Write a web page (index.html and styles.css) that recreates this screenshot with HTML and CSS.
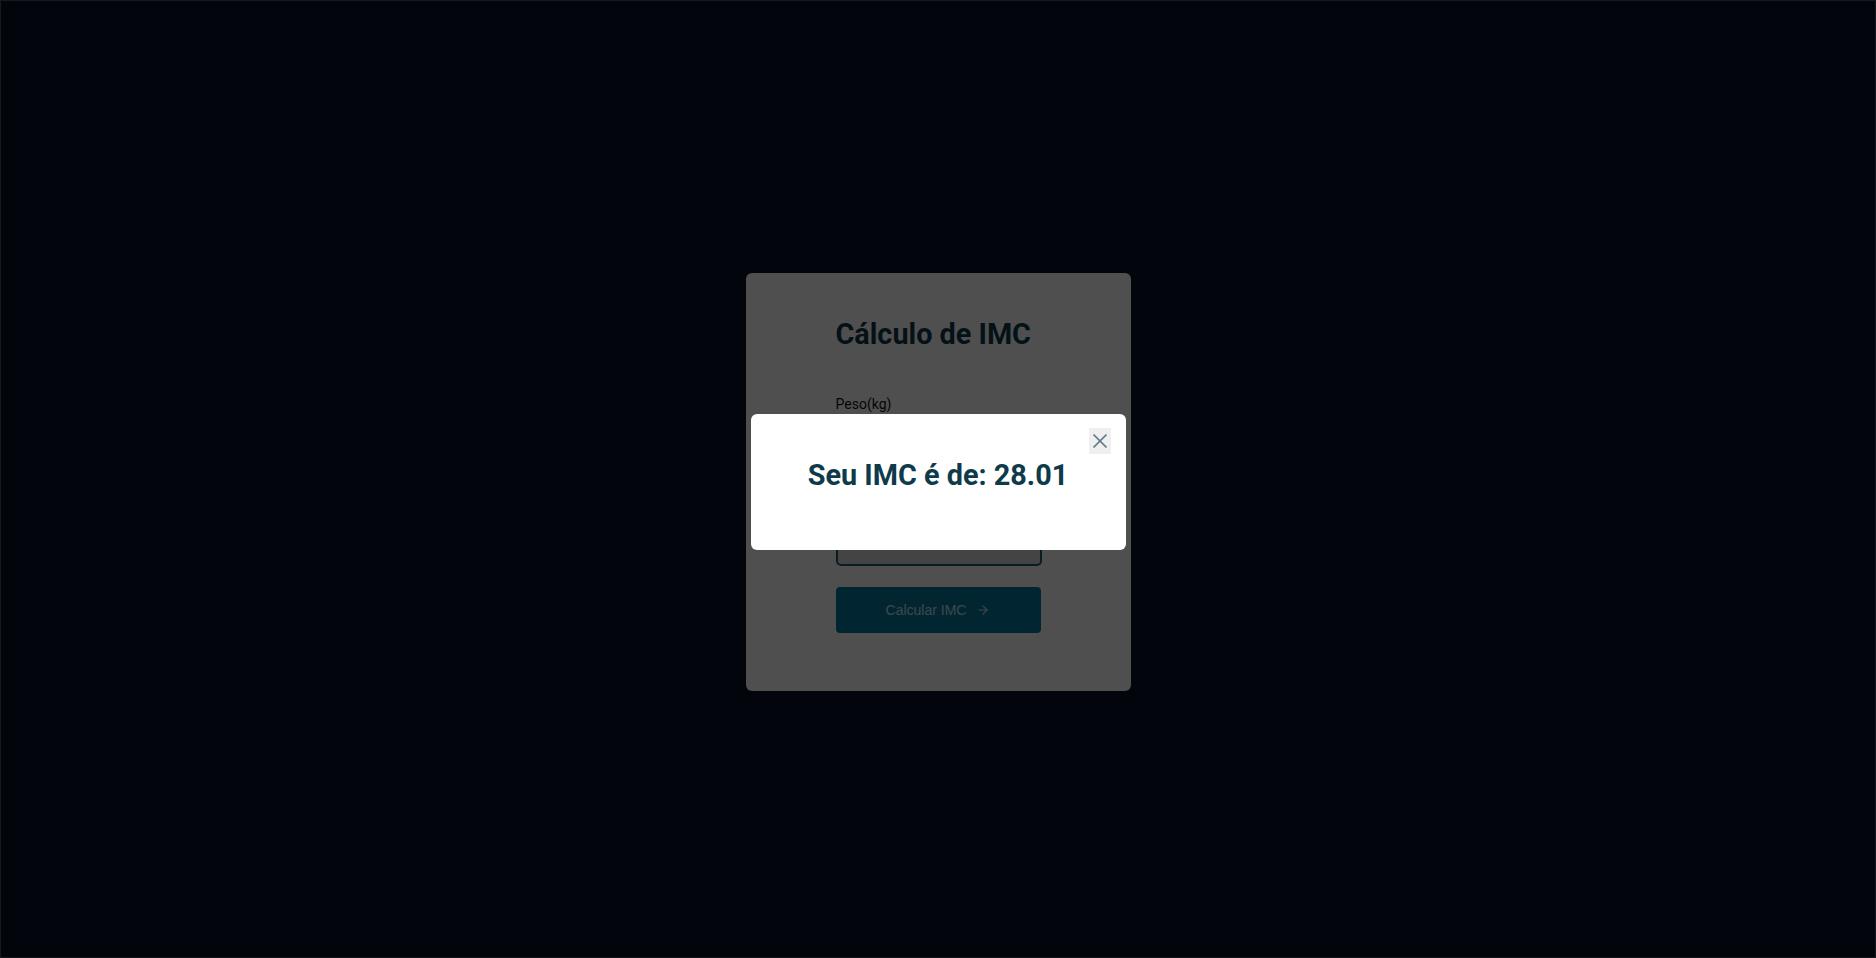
FILE: index.html
```html
<!DOCTYPE html>
<html lang="pt-BR">
<head>
<meta charset="utf-8">
<title>Cálculo de IMC</title>
<link rel="stylesheet" href="styles.css">
</head>
<body>
<main class="page">
  <section class="card">
    <h1 class="card-title">Cálculo de IMC</h1>
    <form class="form">
      <label class="field-label" for="peso">Peso(kg)</label>
      <input class="field-input" id="peso" type="text" value="">
      <label class="field-label second" for="altura">Altura(m)</label>
      <input class="field-input" id="altura" type="text" value="">
      <button class="submit" type="button">
        <span>Calcular IMC</span>
        <svg class="arrow" width="14" height="14" viewBox="0 0 24 24" fill="none" stroke="currentColor" stroke-width="2" stroke-linecap="round" stroke-linejoin="round"><path d="M5 12h14"/><path d="m12 5 7 7-7 7"/></svg>
      </button>
    </form>
  </section>
</main>
<div class="overlay">
  <div class="modal">
    <div class="modal-head">
      <button class="close" type="button" aria-label="Fechar">
        <svg width="14" height="14" viewBox="0 0 14 14" fill="none" stroke="currentColor" stroke-width="1.7" stroke-linecap="round"><path d="M1 1l12 12"/><path d="M13 1L1 13"/></svg>
      </button>
    </div>
    <h2 class="modal-text">Seu IMC é de: 28.01</h2>
  </div>
</div>
</body>
</html>
```
FILE: styles.css
```css
* { box-sizing: border-box; }
html, body { margin: 0; padding: 0; }
body {
  background: #071229;
  font-family: Roboto, "Liberation Sans", Arial, sans-serif;
  height: 958px;
  overflow: hidden;
}
.page {
  height: 958px;
  display: flex;
  align-items: center;
  justify-content: center;
  padding-top: 6px;
}
.card {
  width: 385px;
  height: 418px;
  background: #ffffff;
  border-radius: 6px;
  padding: 44px 90px 0;
}
.card-title {
  margin: 0;
  font-size: 28.8px;
  font-weight: 700;
  color: #0e3a4a;
  line-height: 34px;
}
.form {
  display: flex;
  flex-direction: column;
  margin-top: 45px;
}
.field-label {
  font-size: 14px;
  line-height: 16px;
  color: #111;
}
.field-label.second { margin-top: 30px; }
.field-input {
  margin-top: 8px;
  width: 206px;
  height: 46px;
  border: 2px solid #1e5a70;
  border-radius: 5px;
  background: #dcdcdc;
  font: inherit;
}
.submit {
  margin-top: 21px;
  width: 205px;
  height: 46px;
  border: 0;
  border-radius: 4px;
  background: #077b9e;
  color: #c2e6f0;
  font-family: "Liberation Sans", Arial, sans-serif;
  font-size: 14px;
  display: flex;
  align-items: center;
  justify-content: center;
  gap: 10px;
}
.arrow { display: block; }
.overlay {
  position: fixed;
  inset: 0;
  background: rgba(0, 0, 0, 0.69);
  box-shadow: inset 0 0 0 1px #16191e;
  display: flex;
  align-items: center;
  justify-content: center;
  padding-top: 6px;
}
.modal {
  width: 375px;
  height: 136px;
  background: #ffffff;
  border-radius: 6px;
  padding: 14px 15px 0;
}
.modal-head {
  display: flex;
  justify-content: flex-end;
}
.close {
  width: 22px;
  height: 26px;
  padding: 0;
  border: 0;
  background: #efefef;
  color: #5e7a86;
  display: flex;
  align-items: center;
  justify-content: center;
}
.modal-text {
  margin: 4px 0 0;
  text-align: center;
  font-size: 28.8px;
  font-weight: 700;
  line-height: 34px;
  color: #0e3a4a;
}
```
